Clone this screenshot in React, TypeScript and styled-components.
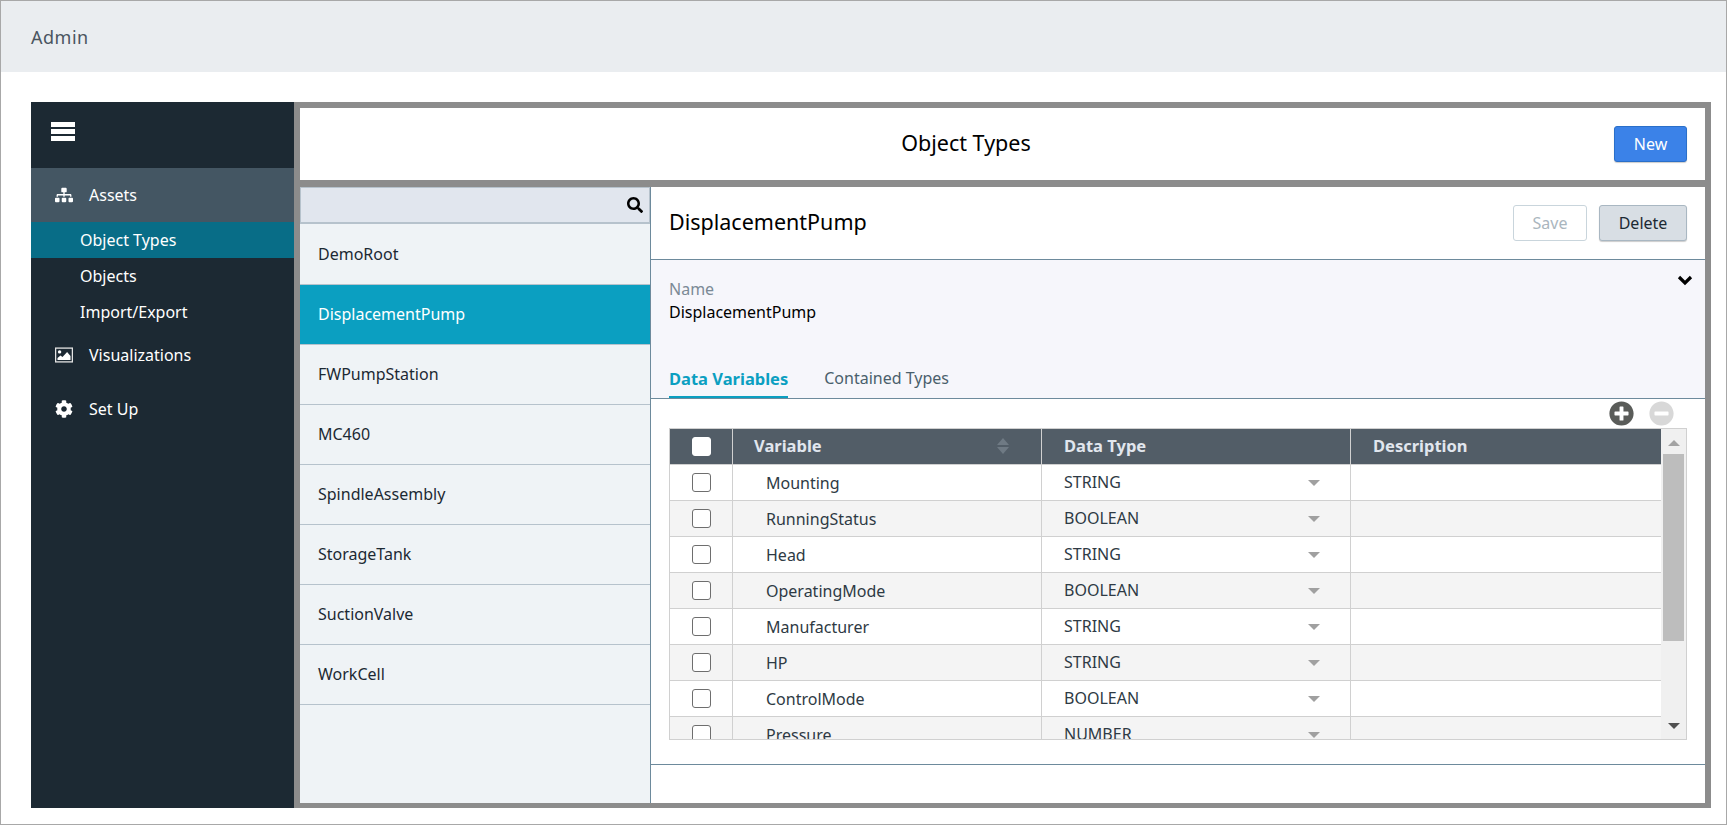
import React from "react";
import styled, { createGlobalStyle } from "styled-components";
import {
  FaSitemap,
  FaCog,
  FaSearch,
  FaPlusCircle,
  FaMinusCircle,
} from "react-icons/fa";

const GlobalStyle = createGlobalStyle`
  html, body {
    margin: 0;
    padding: 0;
    background: #fff;
  }
  * {
    box-sizing: border-box;
  }
`;

const Page = styled.div`
  width: 1727px;
  height: 825px;
  border: 1px solid #a8a8a8;
  background: #fff;
  font-family: "Noto Sans", "Open Sans", sans-serif;
  font-size: 16px;
  color: #1c2933;
  overflow: hidden;
`;

const TopBar = styled.header`
  height: 71px;
  background: #eaedf0;
  display: flex;
  align-items: center;
  padding-left: 30px;
  font-size: 18px;
  letter-spacing: 0.5px;
  color: #4a5560;
`;

const Content = styled.div`
  height: 752px;
  padding: 30px 15px 16px 30px;
  display: flex;
`;

const Sidebar = styled.nav`
  width: 263px;
  flex: none;
  background: #1c2933;
  color: #fff;
  display: flex;
  flex-direction: column;
`;

const MenuToggle = styled.div`
  height: 66px;
  padding: 20px 0 0 20px;
  display: flex;
  flex-direction: column;
  gap: 2px;
`;

const MenuBar = styled.span`
  display: block;
  width: 24px;
  height: 5px;
  background: #fff;
`;

const NavItem = styled.div<{ $active?: boolean; $height: number }>`
  height: ${(p) => p.$height}px;
  display: flex;
  align-items: center;
  padding-left: 24px;
  background: ${(p) => (p.$active ? "#445663" : "transparent")};
  svg {
    width: 18px;
    height: 18px;
    margin-right: 16px;
  }
`;

const SubItem = styled.div<{ $active?: boolean }>`
  height: 36px;
  display: flex;
  align-items: center;
  padding-left: 49px;
  background: ${(p) => (p.$active ? "#086d87" : "transparent")};
`;

const Frame = styled.main`
  flex: 1;
  background: #8c8c8c;
  padding: 6px 6px 5px;
  display: flex;
  flex-direction: column;
  gap: 7px;
`;

const TitleBar = styled.div`
  height: 72px;
  flex: none;
  background: #fff;
  display: flex;
  align-items: center;
  padding: 0 18px;
`;

const Title = styled.div`
  flex: 1;
  text-align: center;
  font-size: 21.5px;
  color: #000;
  padding-bottom: 3px;
`;

const Button = styled.button<{ $variant: "primary" | "ghost" | "muted" }>`
  height: 36px;
  border-radius: 3px;
  font-family: inherit;
  font-size: 16px;
  padding: 0;
  border: 1px solid
    ${(p) =>
      p.$variant === "primary"
        ? "#2a6fc9"
        : p.$variant === "muted"
          ? "#a9b7c2"
          : "#c9d5dc"};
  background: ${(p) =>
    p.$variant === "primary"
      ? "#3b82e8"
      : p.$variant === "muted"
        ? "#d8dee4"
        : "#fff"};
  color: ${(p) =>
    p.$variant === "primary"
      ? "#fff"
      : p.$variant === "muted"
        ? "#1c2933"
        : "#aab6be"};
  box-shadow: ${(p) =>
    p.$variant === "ghost" ? "none" : "0 1px 1px rgba(0, 0, 0, 0.2)"};
`;

const NewButton = styled(Button)`
  width: 73px;
`;

const Body = styled.div`
  flex: 1;
  min-height: 0;
  display: flex;
  background: #fff;
`;

const ListPane = styled.div`
  width: 351px;
  flex: none;
  background: #eff3f6;
  border-right: 1px solid #6d8a9c;
  display: flex;
  flex-direction: column;
`;

const SearchBox = styled.div`
  height: 37px;
  flex: none;
  margin-bottom: 1px;
  background: #e1e6ee;
  border: 1px solid #b6c2cc;
  border-bottom-width: 2px;
  display: flex;
  align-items: center;
  justify-content: flex-end;
  padding-right: 6px;
  color: #000;
  font-size: 16px;
`;

const ListRow = styled.div<{ $selected?: boolean }>`
  height: 60px;
  flex: none;
  display: flex;
  align-items: center;
  padding: 0 0 2px 18px;
  border-bottom: 1px solid #b6c2cc;
  background: ${(p) => (p.$selected ? "#0b9fc1" : "transparent")};
  color: ${(p) => (p.$selected ? "#fff" : "#1c2933")};
`;

const DetailPane = styled.div`
  flex: 1;
  min-width: 0;
  display: flex;
  flex-direction: column;
`;

const DetailHeader = styled.div`
  height: 73px;
  flex: none;
  display: flex;
  align-items: center;
  justify-content: space-between;
  padding: 0 18px;
  border-bottom: 1px solid #6d8a9c;
  color: #000;
`;

const Heading = styled.div`
  font-size: 21.5px;
  padding-bottom: 3px;
`;

const ButtonGroup = styled.div`
  display: flex;
  gap: 12px;
`;

const SaveButton = styled(Button)`
  width: 74px;
`;

const DeleteButton = styled(Button)`
  width: 88px;
`;

const Summary = styled.div`
  height: 139px;
  flex: none;
  background: #f6f6fb;
  border-bottom: 1px solid #6d8a9c;
  padding: 18px 18px 0;
  display: flex;
  flex-direction: column;
  position: relative;
`;

const Chevron = styled.svg`
  position: absolute;
  right: 12px;
  top: 15px;
  width: 16px;
  height: 11px;
`;

const FieldLabel = styled.div`
  color: #7b8a96;
  line-height: 22px;
`;

const FieldValue = styled.div`
  color: #000;
  line-height: 24px;
`;

const Tabs = styled.div`
  margin-top: auto;
  display: flex;
  gap: 36px;
`;

const Tab = styled.div<{ $active?: boolean }>`
  height: 36px;
  padding-top: 5px;
  font-size: ${(p) => (p.$active ? 16.5 : 16)}px;
  font-weight: ${(p) => (p.$active ? 700 : 400)};
  color: ${(p) => (p.$active ? "#0b9fc1" : "#4a5f6c")};
  border-bottom: 2px solid ${(p) => (p.$active ? "#0b9fc1" : "transparent")};
`;

const TableArea = styled.div`
  flex: 1;
  min-height: 0;
  padding: 0 18px;
  display: flex;
  flex-direction: column;
  border-bottom: 1px solid #6d8a9c;
`;

const TableActions = styled.div`
  height: 29px;
  flex: none;
  display: flex;
  justify-content: flex-end;
  align-items: flex-start;
  gap: 15px;
  padding: 2px 13px 0 0;
`;

const PlusIcon = styled(FaPlusCircle)`
  width: 25px;
  height: 25px;
  color: #5a5c59;
`;

const MinusIcon = styled(FaMinusCircle)`
  width: 25px;
  height: 25px;
  color: #d8d8d8;
`;

const TableShell = styled.div`
  height: 312px;
  flex: none;
  border: 1px solid #d0d0d0;
  display: flex;
  overflow: hidden;
`;

const TableBody = styled.div`
  flex: 1;
  min-width: 0;
`;

const GRID = "62px 309px 309px 1fr";

const HeadRow = styled.div`
  display: grid;
  grid-template-columns: ${GRID};
  height: 36px;
  background: #525d67;
  color: #e1e6ee;
  font-size: 16.5px;
  font-weight: 700;
  border-bottom: 1px solid #d0d0d0;
`;

const HeadCell = styled.div`
  display: flex;
  align-items: center;
  padding: 0 0 2px 21px;
  border-left: 1px solid #d0d0d0;
  position: relative;
  &:first-child {
    border-left: 0;
    padding: 0 0 0 22px;
  }
  &:nth-child(n + 3) {
    padding-left: 22px;
  }
`;

const SortMark = styled.svg`
  position: absolute;
  right: 32px;
  top: 9px;
  width: 12px;
  height: 16px;
`;

const Row = styled.div<{ $even?: boolean }>`
  display: grid;
  grid-template-columns: ${GRID};
  height: 36px;
  background: ${(p) => (p.$even ? "#f4f4f4" : "#fff")};
  border-bottom: 1px solid #d0d0d0;
  color: #2e3a44;
`;

const Cell = styled.div`
  display: flex;
  align-items: center;
  border-left: 1px solid #d0d0d0;
  position: relative;
  &:first-child {
    border-left: 0;
    padding-left: 22px;
  }
`;

const NameCell = styled(Cell)`
  padding-left: 33px;
`;

const TypeCell = styled(Cell)`
  padding: 0 0 2px 22px;
`;

const Check = styled.span<{ $head?: boolean }>`
  display: block;
  width: 19px;
  height: 19px;
  border-radius: 3px;
  background: #fff;
  border: 1px solid ${(p) => (p.$head ? "#fff" : "#6e6e6e")};
`;

const DropArrow = styled.span`
  position: absolute;
  right: 30px;
  top: 15px;
  width: 0;
  height: 0;
  border-left: 6px solid transparent;
  border-right: 6px solid transparent;
  border-top: 6px solid #a0a0a0;
`;

const Scrollbar = styled.div`
  width: 25px;
  flex: none;
  background: #f0f0f0;
  display: flex;
  flex-direction: column;
  align-items: center;
  position: relative;
`;

const ScrollArrow = styled.span<{ $dir: "up" | "down" }>`
  width: 0;
  height: 0;
  margin-top: ${(p) => (p.$dir === "up" ? 11 : 0)}px;
  border-left: 6px solid transparent;
  border-right: 6px solid transparent;
  border-bottom: ${(p) => (p.$dir === "up" ? "6px solid #a3a3a3" : "0")};
  border-top: ${(p) => (p.$dir === "down" ? "6px solid #505050" : "0")};
  position: ${(p) => (p.$dir === "down" ? "absolute" : "static")};
  bottom: 10px;
`;

const ScrollThumb = styled.div`
  width: 21px;
  height: 187px;
  margin-top: 8px;
  background: #bdbdbd;
`;

const PaneFooter = styled.div`
  height: 38px;
  flex: none;
`;

// fa4 style picture icon, the react-icons one has a thinner frame
const PictureIcon = () => (
  <svg viewBox="0 0 18 15" fill="none">
    <rect x="0.6" y="0.6" width="16.8" height="13.8" stroke="#e4e4e4" strokeWidth="1.3" />
    <circle cx="4.6" cy="4.4" r="1.7" fill="#fff" />
    <path d="M2.5 12.5v-2l3-2.6 2 1.7 4.6-5 3.4 3.8v4.1z" fill="#fff" />
  </svg>
);

const objectTypes = [
  "DemoRoot",
  "DisplacementPump",
  "FWPumpStation",
  "MC460",
  "SpindleAssembly",
  "StorageTank",
  "SuctionValve",
  "WorkCell",
];

const variables = [
  ["Mounting", "STRING"],
  ["RunningStatus", "BOOLEAN"],
  ["Head", "STRING"],
  ["OperatingMode", "BOOLEAN"],
  ["Manufacturer", "STRING"],
  ["HP", "STRING"],
  ["ControlMode", "BOOLEAN"],
  ["Pressure", "NUMBER"],
];

const App: React.FC = () => {
  return (
    <Page>
      <GlobalStyle />
      <TopBar>Admin</TopBar>
      <Content>
        <Sidebar>
          <MenuToggle>
            <MenuBar />
            <MenuBar />
            <MenuBar />
          </MenuToggle>
          <NavItem $active $height={54}>
            <FaSitemap />
            Assets
          </NavItem>
          <SubItem $active>Object Types</SubItem>
          <SubItem>Objects</SubItem>
          <SubItem>Import/Export</SubItem>
          <NavItem $height={50}>
            <PictureIcon />
            Visualizations
          </NavItem>
          <NavItem $height={58}>
            <FaCog />
            Set Up
          </NavItem>
        </Sidebar>
        <Frame>
          <TitleBar>
            <Title>Object Types</Title>
            <NewButton $variant="primary">New</NewButton>
          </TitleBar>
          <Body>
            <ListPane>
              <SearchBox>
                <FaSearch />
              </SearchBox>
              {objectTypes.map((name) => (
                <ListRow key={name} $selected={name === "DisplacementPump"}>
                  {name}
                </ListRow>
              ))}
            </ListPane>
            <DetailPane>
              <DetailHeader>
                <Heading>DisplacementPump</Heading>
                <ButtonGroup>
                  <SaveButton $variant="ghost">Save</SaveButton>
                  <DeleteButton $variant="muted">Delete</DeleteButton>
                </ButtonGroup>
              </DetailHeader>
              <Summary>
                <Chevron viewBox="0 0 16 11">
                  <path d="M2 2l6 6 6-6" fill="none" stroke="#000" strokeWidth="3.2" />
                </Chevron>
                <FieldLabel>Name</FieldLabel>
                <FieldValue>DisplacementPump</FieldValue>
                <Tabs>
                  <Tab $active>Data Variables</Tab>
                  <Tab>Contained Types</Tab>
                </Tabs>
              </Summary>
              <TableArea>
                <TableActions>
                  <PlusIcon />
                  <MinusIcon />
                </TableActions>
                <TableShell>
                  <TableBody>
                    <HeadRow>
                      <HeadCell>
                        <Check $head />
                      </HeadCell>
                      <HeadCell>
                        Variable
                        <SortMark viewBox="0 0 12 16">
                          <path d="M6 0l6 7H0z" fill="#6f7a84" />
                          <path d="M6 16l6-7H0z" fill="#6f7a84" />
                        </SortMark>
                      </HeadCell>
                      <HeadCell>Data Type</HeadCell>
                      <HeadCell>Description</HeadCell>
                    </HeadRow>
                    {variables.map(([name, type], i) => (
                      <Row key={name} $even={i % 2 === 1}>
                        <Cell>
                          <Check />
                        </Cell>
                        <NameCell>{name}</NameCell>
                        <TypeCell>
                          {type}
                          <DropArrow />
                        </TypeCell>
                        <Cell />
                      </Row>
                    ))}
                  </TableBody>
                  <Scrollbar>
                    <ScrollArrow $dir="up" />
                    <ScrollThumb />
                    <ScrollArrow $dir="down" />
                  </Scrollbar>
                </TableShell>
              </TableArea>
              <PaneFooter />
            </DetailPane>
          </Body>
        </Frame>
      </Content>
    </Page>
  );
};

export default App;
